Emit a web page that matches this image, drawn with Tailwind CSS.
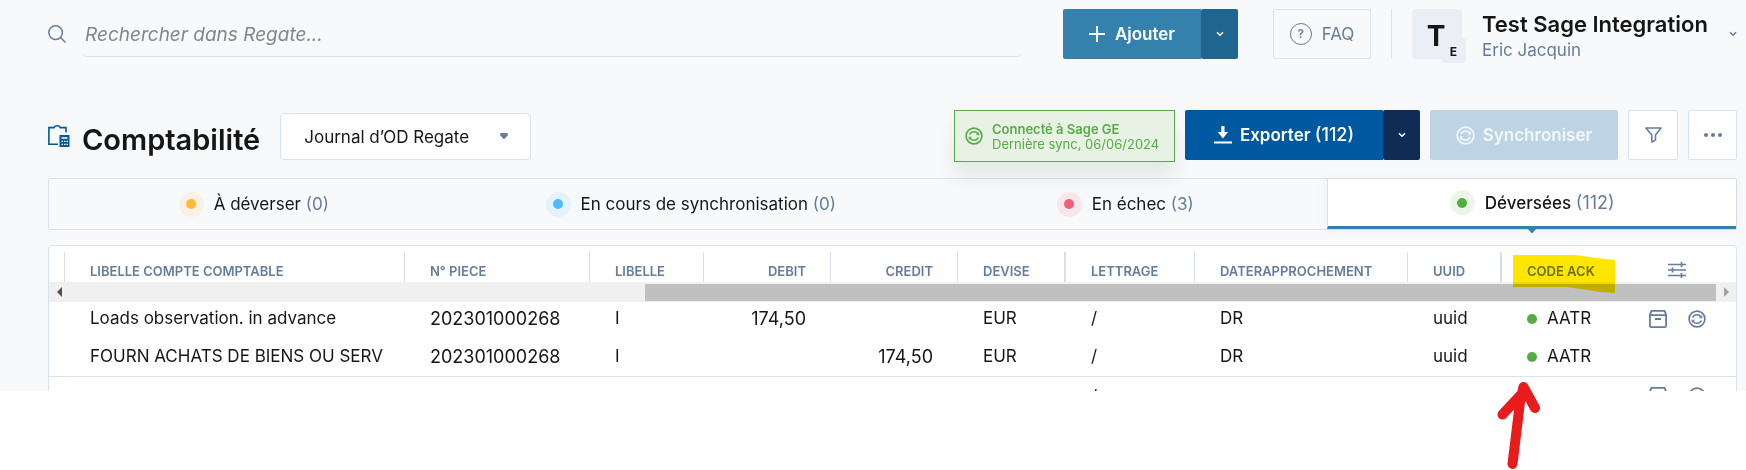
<!DOCTYPE html>
<html lang="fr">

<head>
    <meta charset="UTF-8">
    <meta name="viewport" content="width=device-width, initial-scale=1.0">
    <title>Comptabilité</title>
    <script src="https://cdn.jsdelivr.net/npm/@tailwindcss/browser@4"></script>
</head>

<body class="relative min-h-screen bg-white font-['Inter',sans-serif] text-[#161616]">
    <svg class="hidden">
        <symbol id="sync" viewBox="0 0 20 20" fill="none" stroke="currentColor">
            <circle cx="10" cy="10" r="8.800" stroke-width="1.800" />
            <path d="M5.200 8.300C7 4.200 12.800 4.200 14.600 8.100M14.800 11.700C13 15.800 7.200 15.800 5.400 11.900" stroke-width="1.700" />
            <path d="M15.300 6v2.700h-2.700M4.700 14v-2.700h2.700" stroke-width="1.200" />
        </symbol>
        <symbol id="archive" viewBox="0 0 18 18" fill="none" stroke="currentColor" stroke-width="1.800">
            <path d="M.9 4.800 2.400.9h13.200l1.500 3.900v11a1.300 1.300 0 0 1-1.300 1.300H2.200A1.300 1.300 0 0 1 .9 15.800z" stroke-linejoin="round" />
            <path d="M1 5.200h16M6 9h6" />
        </symbol>
        <symbol id="chevron" viewBox="0 0 8 6" fill="none" stroke="currentColor" stroke-width="1.500">
            <path d="m1 1.300 3 3 3-3" />
        </symbol>
    </svg>

    <main class="max-h-[391px] overflow-hidden bg-[#f7f9fb] pt-[9px] pr-[9px] pl-12">
        <header class="flex h-[50px] items-center">
            <label for="search" class="mr-[17px] text-[#667c9c]">
                <svg class="size-[18px]" viewBox="0 0 18 18" fill="none" stroke="currentColor" stroke-width="1.500">
                    <circle cx="7.600" cy="7.600" r="6.800" />
                    <path d="m12.500 12.500 5 5" />
                </svg>
            </label>
            <input id="search" type="text" placeholder="Rechercher dans Regate..."
                class="mt-[2px] h-11 min-w-0 flex-1 rounded-sm border-b border-[#d9e3ed] pl-[2px] text-[19px] italic outline-none placeholder:text-[#858585]">

            <div class="ml-[42px] flex h-[50px] font-semibold text-white">
                <button class="flex w-[138px] items-center justify-center gap-[10px] rounded-l-xs bg-[#3581ae] text-[17px]">
                    <svg class="size-4" viewBox="0 0 16 16" stroke="currentColor" stroke-width="2">
                        <path d="M8 0v16M0 8h16" />
                    </svg>
                    <span class="pt-[2px]">Ajouter</span>
                </button>
                <button class="flex w-[37px] items-center justify-center rounded-xs bg-[#1e6690]" aria-label="Options">
                    <svg class="h-[6px] w-2"><use href="#chevron" /></svg>
                </button>
            </div>

            <a href="#" class="ml-[35px] flex h-[50px] w-[98px] items-center justify-center gap-[10px] rounded-xs border border-[#d9e3ed] text-[17px] text-[#667c9c]">
                <span class="flex size-[22px] items-center justify-center rounded-full border border-[#667c9c] text-xs font-semibold">?</span>
                <span class="pt-[2px]">FAQ</span>
            </a>

            <div class="mx-5 h-[50px] w-px bg-[#d9e3ed]"></div>

            <div class="relative flex size-[50px] items-center justify-center rounded bg-[#eceef6] pt-1 pr-[2px] text-[28px] font-bold">
                T
                <span class="absolute -right-1 -bottom-1 flex size-[25px] items-center justify-center rounded bg-[#eceef6] pt-[2px] text-xs font-bold">E</span>
            </div>
            <div class="ml-5 w-[227px] pt-[3px] whitespace-nowrap">
                <p class="text-[22px] leading-7 font-semibold">Test Sage Integration</p>
                <p class="text-[17px] leading-6 text-[#667c9c]">Eric Jacquin</p>
            </div>
            <button class="ml-5 text-[#667c9c]" aria-label="Compte">
                <svg class="h-[6px] w-2"><use href="#chevron" /></svg>
            </button>
        </header>

        <div class="mt-[51px] flex h-[52px] items-start">
            <svg class="mt-[15px] size-[22px] shrink-0 text-[#0058a0]" viewBox="0 0 22 22" fill="none" stroke="currentColor" stroke-width="1.600">
                <path d="M10 19.200H.9V2.600h5.100C6.600 1 7.800.8 9.200.8s2.600.2 3.200 1.800H18v5" />
                <path d="M11.500 10h10v12h-10z" fill="currentColor" stroke="none" />
                <path d="M13.500 13h6M13.500 16.300h1.500m1 0h1.500m1 0H20M13.500 19.300h1.500m1 0h1.500m1 0H20" stroke="#fff" stroke-width="1.300" />
            </svg>
            <h1 class="mt-3 ml-3 text-[29px] leading-9 font-semibold">Comptabilité</h1>
            <div class="relative mt-[3px] ml-5">
                <select aria-label="Journal" class="h-[47px] w-[251px] appearance-none rounded border border-[#d9e3ed] bg-white pt-[2px] pl-[23px] text-[17px]">
                    <option>Journal d’OD Regate</option>
                </select>
                <svg class="pointer-events-none absolute top-5 right-[23px] h-[6px] w-2 text-[#667c9c]" viewBox="0 0 8 6" fill="currentColor">
                    <path d="M1 0h6l1 1v1L4.500 6h-1L0 2V1z" />
                </svg>
            </div>

            <div class="ml-auto flex items-start gap-[10px] text-[17px]">
                <div class="flex h-[52px] w-[221px] items-center gap-[9px] border border-[#57ab45] bg-[#e7f1e4] pl-[10px] text-[#57ab45] shadow-[0_16px_20px_rgba(0,0,0,0.07)]">
                    <svg class="size-[18px] shrink-0"><use href="#sync" /></svg>
                    <p class="pt-[2px] text-[13px] leading-[15px] whitespace-nowrap"><b class="font-semibold">Connecté à Sage GE</b><br>Dernière sync, 06/06/2024</p>
                </div>
                <div class="flex h-[50px] font-semibold text-white">
                    <button class="flex w-[198px] items-center justify-center gap-2 rounded-l-xs bg-[#0058a0]">
                        <svg class="size-[18px]" viewBox="0 0 18 18" fill="currentColor">
                            <path d="M7.300 0h3.200v6H14l-5.100 6.500L3.800 6h3.500zM0 15.500h18v2H0z" />
                        </svg>
                        <span class="pt-[2px]">Exporter <span class="text-lg leading-6 font-medium">(112)</span></span>
                    </button>
                    <button class="flex w-[37px] items-center justify-center rounded-xs bg-[#0e2c54]" aria-label="Options d’export">
                        <svg class="h-[6px] w-2"><use href="#chevron" /></svg>
                    </button>
                </div>
                <button disabled class="flex h-[50px] w-[188px] items-center justify-center gap-2 rounded-xs bg-[#bcd4e4] font-semibold text-[#f2f7fa]">
                    <svg class="size-[19px]"><use href="#sync" /></svg>
                    <span class="pt-[2px]">Synchroniser</span>
                </button>
                <button class="flex size-[50px] items-center justify-center rounded-xs border border-[#d9e3ed] bg-white text-[#667c9c]" aria-label="Filtrer">
                    <svg class="h-4 w-[17px]" viewBox="0 0 17 16" fill="none" stroke="currentColor" stroke-width="1.500" stroke-linejoin="round">
                        <path d="M.9 1h15.200L10.500 8v5.200L6.800 15V8z" />
                    </svg>
                </button>
                <button class="flex h-[50px] w-[49px] items-center justify-center gap-[3px] rounded-xs border border-[#d9e3ed] bg-white" aria-label="Plus">
                    <span class="size-1 rounded-full bg-[#667c9c]"></span>
                    <span class="size-1 rounded-full bg-[#667c9c]"></span>
                    <span class="size-1 rounded-full bg-[#667c9c]"></span>
                </button>
            </div>
        </div>

        <nav class="mt-4 grid h-[52px] grid-cols-[410fr_465fr_405fr_409fr] rounded-xs border border-[#d9e3ed] text-[17px]">
            <button class="flex items-center justify-center gap-[10px]">
                <span class="flex size-[25px] items-center justify-center rounded-full bg-[#f9f1e4]"><span class="size-[10px] rounded-full bg-[#ffba3c]"></span></span>
                <span class="pt-[2px]">À déverser <span class="text-[#667c9c]">(0)</span></span>
            </button>
            <button class="flex items-center justify-center gap-[10px]">
                <span class="flex size-[25px] items-center justify-center rounded-full bg-[#e4f2fa]"><span class="size-[10px] rounded-full bg-[#4dbcf9]"></span></span>
                <span class="pt-[2px]">En cours de synchronisation <span class="text-[#667c9c]">(0)</span></span>
            </button>
            <button class="flex items-center justify-center gap-[10px]">
                <span class="flex size-[25px] items-center justify-center rounded-full bg-[#f6e7ea]"><span class="size-[10px] rounded-full bg-[#ee6076]"></span></span>
                <span class="pt-[2px]">En échec <span class="text-[#667c9c]">(3)</span></span>
            </button>
            <button class="relative flex items-center justify-center gap-[10px] border-b-3 border-l border-b-[#3581ae] border-l-[#d9e3ed] bg-white shadow-[0_0_10px_rgba(0,0,0,0.06)]">
                <span class="flex size-[25px] items-center justify-center rounded-full bg-[#edf5eb]"><span class="size-[10px] rounded-full bg-[#57ab45]"></span></span>
                <span class="pt-[2px]"><span class="font-medium">Déversées</span> <span class="text-lg leading-6 text-[#667c9c]">(112)</span></span>
                <svg class="absolute top-full left-1/2 mt-[2px] h-[5px] w-[10px] -translate-x-1/2" viewBox="0 0 10 5" fill="#3581ae"><path d="M0 0h10L5.500 5h-1z" /></svg>
            </button>
        </nav>

        <div class="mt-[15px] rounded border border-[#d9e3ed] bg-white">
            <table class="w-full table-fixed text-[17px] whitespace-nowrap">
                <colgroup>
                    <col class="w-4">
                    <col class="w-[340px]">
                    <col class="w-[185px]">
                    <col class="w-[114px]">
                    <col class="w-[127px]">
                    <col class="w-[127px]">
                    <col class="w-[108px]">
                    <col class="w-[129px]">
                    <col class="w-[213px]">
                    <col class="w-[94px]">
                    <col class="w-[116px]">
                    <col class="w-[118px]">
                </colgroup>
                <thead class="text-left text-[13px] text-[#667c9c]">
                    <tr>
                        <th class="p-0 pt-[6px]"><div class="h-[30px] border-r border-[#d9deea]"></div></th>
                        <th class="p-0 pt-[6px] font-semibold"><div class="flex h-[30px] items-center border-r border-[#d9deea] pt-[10px] pl-[25px]">LIBELLE COMPTE COMPTABLE</div></th>
                        <th class="p-0 pt-[6px] font-semibold"><div class="flex h-[30px] items-center border-r border-[#d9deea] pt-[10px] pl-[25px]">N° PIECE</div></th>
                        <th class="p-0 pt-[6px] font-semibold"><div class="flex h-[30px] items-center border-r border-[#d9deea] pt-[10px] pl-[25px]">LIBELLE</div></th>
                        <th class="p-0 pt-[6px] font-semibold"><div class="flex h-[30px] items-center justify-end border-r border-[#d9deea] pt-[10px] pr-6">DEBIT</div></th>
                        <th class="p-0 pt-[6px] font-semibold"><div class="flex h-[30px] items-center justify-end border-r border-[#d9deea] pt-[10px] pr-6">CREDIT</div></th>
                        <th class="p-0 pt-[6px] font-semibold"><div class="flex h-[30px] items-center border-r-2 border-[#d9deea] pt-[10px] pl-[25px]">DEVISE</div></th>
                        <th class="p-0 pt-[6px] font-semibold"><div class="flex h-[30px] items-center border-r border-[#d9deea] pt-[10px] pl-[25px]">LETTRAGE</div></th>
                        <th class="p-0 pt-[6px] font-semibold"><div class="flex h-[30px] items-center border-r border-[#d9deea] pt-[10px] pl-[25px]">DATERAPPROCHEMENT</div></th>
                        <th class="p-0 pt-[6px] font-semibold"><div class="flex h-[30px] items-center border-r-2 border-[#d9deea] pt-[10px] pl-[25px]">UUID</div></th>
                        <th class="relative p-0 pt-[6px] font-semibold">
                            <div class="flex h-[30px] items-center pt-[10px] pl-[25px]">CODE ACK</div>
                            <svg class="absolute top-2 left-[11px] z-10 h-10 w-[103px] mix-blend-multiply" viewBox="0 0 103 40" fill="#ffe600">
                                <path d="M0 1h62l22 3 18 2v33l-14-1-34-5H0z" />
                            </svg>
                        </th>
                        <th class="p-0 pt-[6px]">
                            <button class="mx-auto flex h-[30px] items-center pt-[6px]" aria-label="Colonnes">
                                <svg class="h-4 w-[18px]" viewBox="0 0 18 16" stroke="currentColor" stroke-width="1.700">
                                    <path d="M0 2.500h18M0 8h18M0 13.500h18M13.500 0v5M4.500 5.500v5M13.500 11v5" />
                                </svg>
                            </button>
                        </th>
                    </tr>
                    <tr>
                        <td colspan="12" class="p-0">
                            <div class="flex h-5 items-center bg-[#f0f0f0]">
                                <button class="flex w-5 justify-center text-[#505050]" aria-label="Défiler à gauche">
                                    <svg class="h-[10px] w-[5px]" viewBox="0 0 5 10" fill="currentColor"><path d="M5 0v10L0 5z" /></svg>
                                </button>
                                <div class="flex flex-1 justify-end"><div class="h-[17px] w-[65%] bg-[#c0c0c0]"></div></div>
                                <button class="flex w-5 justify-center text-[#a0a0a0]" aria-label="Défiler à droite">
                                    <svg class="h-[10px] w-[5px]" viewBox="0 0 5 10" fill="currentColor"><path d="M0 0v10l5-5z" /></svg>
                                </button>
                            </div>
                        </td>
                    </tr>
                </thead>
                <tbody>
                    <tr class="h-9 *:p-0 *:pb-[3px]">
                        <td></td>
                        <td><div class="pl-[25px]">Loads observation. in advance</div></td>
                        <td><div class="pl-[25px] text-lg leading-6">202301000268</div></td>
                        <td><div class="pl-[25px]">I</div></td>
                        <td><div class="pr-[25px] text-right text-lg leading-6">174,50</div></td>
                        <td></td>
                        <td><div class="pl-[25px]">EUR</div></td>
                        <td><div class="pl-[25px]">/</div></td>
                        <td><div class="pl-[25px]">DR</div></td>
                        <td><div class="pl-[25px]">uuid</div></td>
                        <td><div class="flex items-center gap-[10px] pl-[25px]"><span class="size-[10px] rounded-full bg-[#57ab45]"></span>AATR</div></td>
                        <td>
                            <div class="flex justify-center gap-[21px] text-[#667c9c]">
                                <button aria-label="Archiver"><svg class="size-[18px]"><use href="#archive" /></svg></button>
                                <button aria-label="Synchroniser la ligne"><svg class="size-[18px]"><use href="#sync" /></svg></button>
                            </div>
                        </td>
                    </tr>
                    <tr class="h-[38px] border-b border-[#d9e3ed] *:p-0">
                        <td></td>
                        <td><div class="pl-[25px]">FOURN ACHATS DE BIENS OU SERV</div></td>
                        <td><div class="pl-[25px] text-lg leading-6">202301000268</div></td>
                        <td><div class="pl-[25px]">I</div></td>
                        <td></td>
                        <td><div class="pr-[25px] text-right text-lg leading-6">174,50</div></td>
                        <td><div class="pl-[25px]">EUR</div></td>
                        <td><div class="pl-[25px]">/</div></td>
                        <td><div class="pl-[25px]">DR</div></td>
                        <td><div class="pl-[25px]">uuid</div></td>
                        <td><div class="flex items-center gap-[10px] pl-[25px]"><span class="size-[10px] rounded-full bg-[#57ab45]"></span>AATR</div></td>
                        <td></td>
                    </tr>
                    <tr class="h-10 *:p-0">
                        <td colspan="7"></td>
                        <td><div class="pl-[25px]">/</div></td>
                        <td colspan="3"></td>
                        <td>
                            <div class="flex justify-center gap-[21px] text-[#667c9c]">
                                <button aria-label="Archiver"><svg class="size-[18px]"><use href="#archive" /></svg></button>
                                <button aria-label="Synchroniser la ligne"><svg class="size-[18px]"><use href="#sync" /></svg></button>
                            </div>
                        </td>
                    </tr>
                </tbody>
            </table>
        </div>
    </main>

    <!-- arrow pointing at the CODE ACK column -->
    <svg class="absolute top-[380px] right-[204px] h-[90px] w-[46px]" viewBox="0 0 46 90" fill="none" stroke="#e81c1c" stroke-width="10" stroke-linecap="round" stroke-linejoin="round">
        <path d="M16.500 84 24 22 27.500 7M6.500 34.500 27.500 12V7L39 28" />
    </svg>
</body>

</html>
